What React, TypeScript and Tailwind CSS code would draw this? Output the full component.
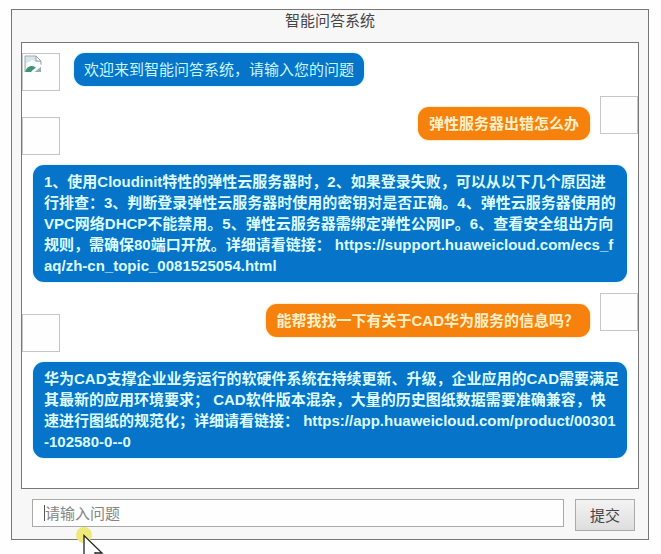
import type { ReactNode } from "react";

function BrokenImage() {
  return (
    <svg width="18" height="18" viewBox="0 0 18 18" role="img" aria-label="头像">
      <path d="M1 1h11l5 5v11H1z" fill="#d5e6f0" />
      <path d="M2 9c1-2 3-2 4-2 1-3 5-2 5 0h5v4l-5 4H2z" fill="#fbfdfd" />
      <path d="M1 17c1-4 4-6 7-6 2 0 3 1 4 2l-5 4z" fill="#3f9475" />
      <path d="M1 17V1h11l5 5v4" fill="none" stroke="#a3aab0" />
      <path d="M12 1v5h5z" fill="#fff" stroke="#979fa6" />
      <path d="M8 17l9-7" fill="none" stroke="#fff" strokeWidth="2" />
      <path d="M11 17l6-5v5z" fill="#8fb0a5" />
    </svg>
  );
}

function Avatar({ children, low = false }: { children?: ReactNode; low?: boolean }) {
  return (
    <div
      className={`size-[38px] shrink-0 border border-[#c6c6c6] bg-[#fefefe] p-px ${low ? "mt-[21px]" : ""}`}
    >
      {children}
    </div>
  );
}

function Question({ children }: { children: ReactNode }) {
  return (
    <div className="flex items-start">
      <Avatar low />
      <p className="mt-[11px] mr-2.5 ml-auto rounded-[11px] bg-[#f6820d] px-[11px] py-1.5 font-bold text-[#fff0c8] shadow-[0_0_2px_#ffc66a]">
        {children}
      </p>
      <Avatar />
    </div>
  );
}

function Answer({ children }: { children: ReactNode }) {
  return (
    <p className="mx-[11px] mt-2.5 mb-[11px] rounded-[11px] bg-[#0674c8] py-1.5 pr-[7px] pl-[11px] font-bold break-all text-[#dcfcff] shadow-[0_0_2px_#a5edff]">
      {children}
    </p>
  );
}

function Pointer() {
  return (
    <div className="pointer-events-none absolute top-[517px] left-[64px]" aria-hidden="true">
      <svg width="30" height="40" viewBox="0 0 30 40">
        <circle cx="8" cy="8" r="8" fill="#eee979" />
        <path
          d="M8 8.500V33l6-5 4 9 5-2-4-9h7z"
          fill="#fff"
          stroke="#222"
          strokeWidth="1.300"
        />
      </svg>
    </div>
  );
}

export default function App() {
  return (
    <div className="h-screen overflow-hidden bg-[#fefefe] pt-[9px] pr-3 pl-[11px] font-['Liberation_Sans','Noto_Sans_CJK_SC',sans-serif] text-[15px] leading-[21px]">
      <main className="relative border border-[#777] bg-[#f6f7f6] px-[9px] pb-2">
        <h1 className="pb-[11px] text-center text-[#454545]">智能问答系统</h1>
        <section
          aria-label="对话"
          className="flex flex-col border border-[#777] bg-[#fefffe] pt-2.5 pb-[19px]"
        >
          <div className="mb-[5px] flex items-start">
            <Avatar>
              <BrokenImage />
            </Avatar>
            <p className="ml-3.5 rounded-[11px] bg-[#0674c8] px-2.5 py-1.5 text-[#c9f8ff] shadow-[0_0_2px_#8ae8ff]">
              欢迎来到智能问答系统，请输入您的问题
            </p>
          </div>
          <Question>弹性服务器出错怎么办</Question>
          <Answer>
            1、使用Cloudinit特性的弹性云服务器时，2、如果登录失败，可以从以下几个原因进行排查：3、判断登录弹性云服务器时使用的密钥对是否正确。4、弹性云服务器使用的VPC网络DHCP不能禁用。5、弹性云服务器需绑定弹性公网IP。6、查看安全组出方向规则，需确保80端口开放。详细请看链接：
            https://support.huaweicloud.com/ecs_faq/zh-cn_topic_0081525054.html
          </Answer>
          <Question>能帮我找一下有关于CAD华为服务的信息吗？</Question>
          <Answer>
            华为CAD支撑企业业务运行的软硬件系统在持续更新、升级，企业应用的CAD需要满足其最新的应用环境要求；
            CAD软件版本混杂，大量的历史图纸数据需要准确兼容，快速进行图纸的规范化；详细请看链接：
            https://app.huaweicloud.com/product/00301-102580-0--0
          </Answer>
        </section>
        <form
          className="mt-2.5 flex items-start gap-[11px] pr-1 pl-[11px]"
          onSubmit={(event) => event.preventDefault()}
        >
          <div className="relative min-w-0 flex-1">
            <input
              type="text"
              aria-label="请输入问题"
              placeholder="请输入问题"
              className="block h-7 w-full border border-[#a9a9a9] bg-[#fefefe] px-3 placeholder:text-[#858585] focus:outline-none"
            />
            <span className="absolute top-1.5 left-3 h-4 w-px bg-[#555]" aria-hidden="true" />
          </div>
          <button
            type="submit"
            className="h-8 w-[60px] border border-[#aaa] bg-linear-to-b from-[#f3f3f3] to-[#dedede] text-[#444]"
          >
            提交
          </button>
        </form>
        <Pointer />
      </main>
    </div>
  );
}
